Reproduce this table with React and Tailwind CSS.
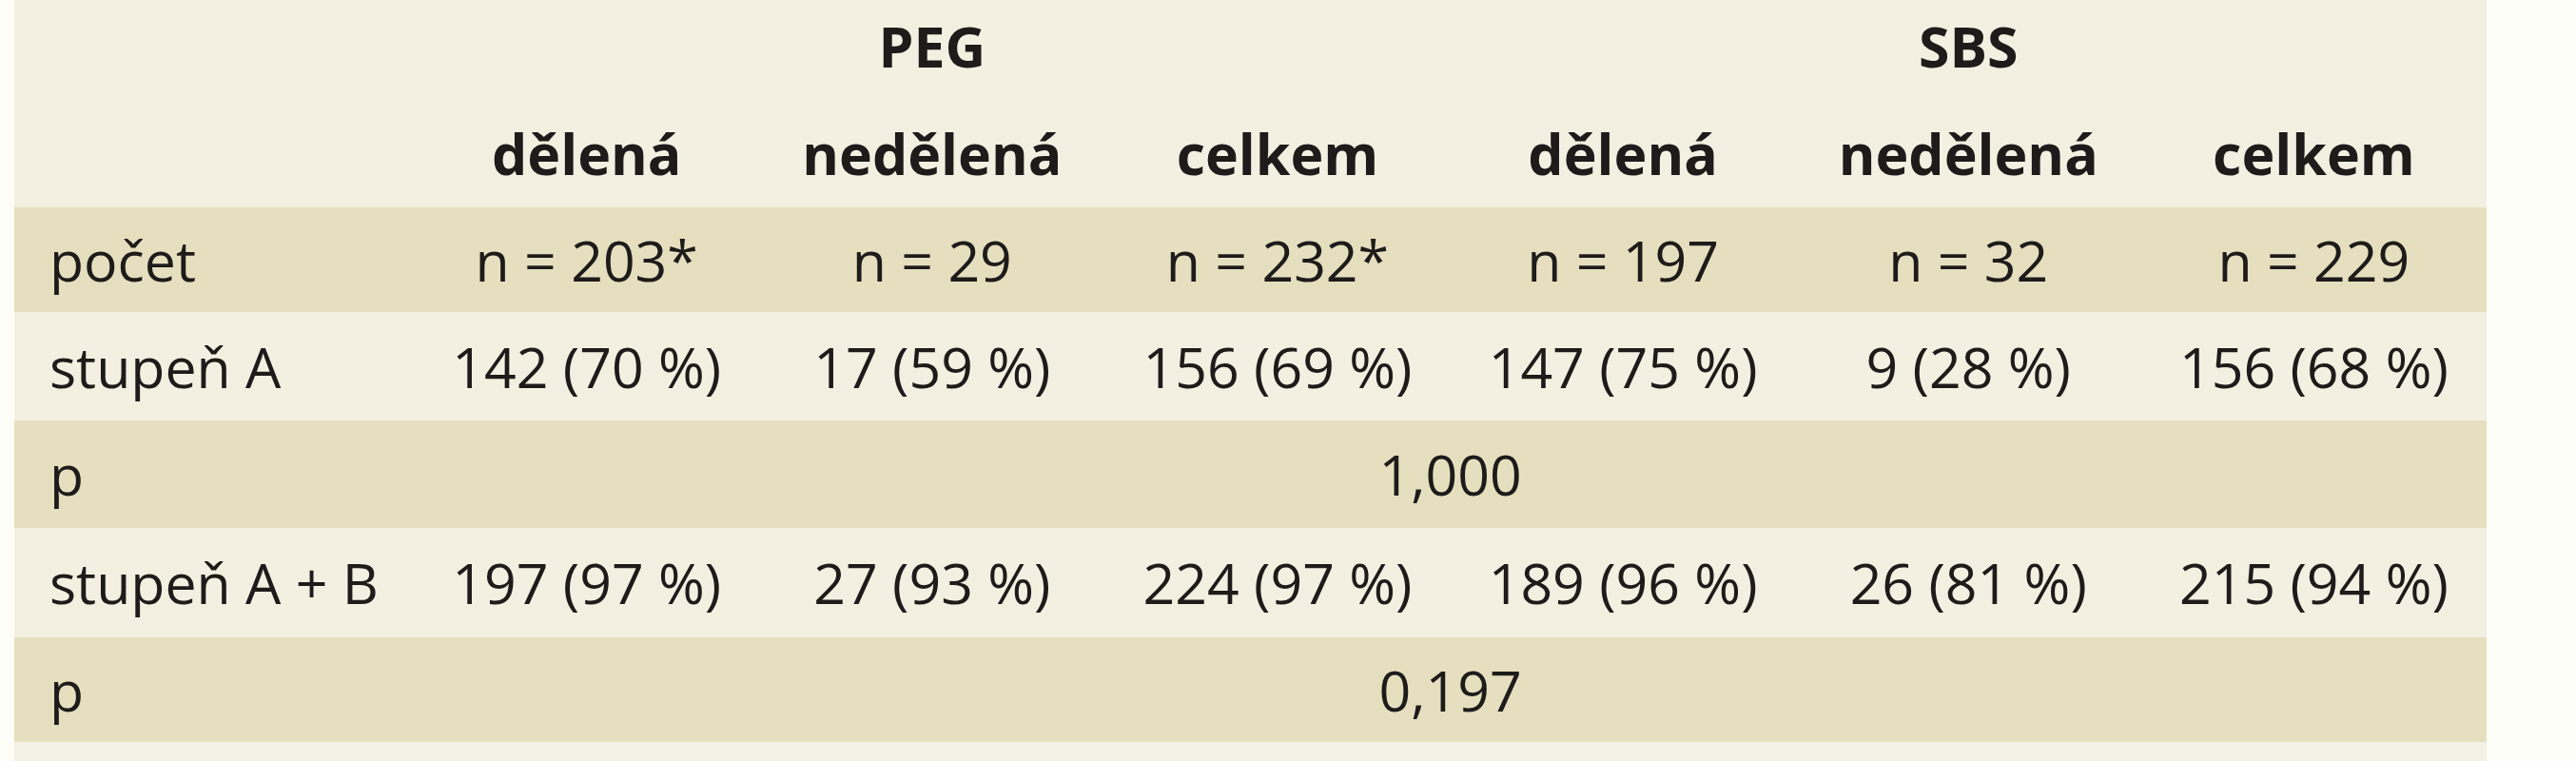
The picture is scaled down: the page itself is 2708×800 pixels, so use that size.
import React from 'react';

const ROWS = [
    { label: 'počet', dark: true, h: 'h-[110px]', cells: ['n = 203*', 'n = 29', 'n = 232*', 'n = 197', 'n = 32', 'n = 229'] },
    { label: 'stupeň A', dark: false, h: 'h-[114px]', cells: ['142 (70 %)', '17 (59 %)', '156 (69 %)', '147 (75 %)', '9 (28 %)', '156 (68 %)'] },
    { label: 'p', dark: true, h: 'h-[113px]', span: '1,000' },
    { label: 'stupeň A + B', dark: false, h: 'h-[115px]', cells: ['197 (97 %)', '27 (93 %)', '224 (97 %)', '189 (96 %)', '26 (81 %)', '215 (94 %)'] },
    { label: 'p', dark: true, h: 'h-[110px]', span: '0,197' },
];

const SUB = ['dělená', 'nedělená', 'celkem', 'dělená', 'nedělená', 'celkem'];

const App = () => {
    return (
        <div className="w-[2708px] h-[800px] overflow-hidden bg-[#fdfdf8] pl-[15px] text-[59px] leading-none text-[#1e1b1a]"
             style={{ fontFamily: '"Open Sans", "Noto Sans", sans-serif' }}>
            <table className="w-[2599px] border-collapse table-fixed">
                <colgroup>
                    <col className="w-[420px]" />
                    {SUB.map((_, i) => <col key={i} className="w-[363px]" />)}
                </colgroup>
                <thead className="bg-[#f3f0e2]">
                    <tr className="h-[100px]">
                        <th></th>
                        <th colSpan={3} className="text-center align-middle font-bold pb-[4px]">PEG</th>
                        <th colSpan={3} className="text-center align-middle font-bold pb-[4px]">SBS</th>
                    </tr>
                    <tr className="h-[118px]">
                        <th></th>
                        {SUB.map((s, i) => (
                            <th key={i} className="text-center align-middle font-bold pt-[4px]">{s}</th>
                        ))}
                    </tr>
                </thead>
                <tbody>
                    {ROWS.map((row, i) => (
                        <tr key={i} className={`${row.h} ${row.dark ? 'bg-[#e6dfbf]' : 'bg-[#f3f0e1]'}`}>
                            <td className="pl-[37px] align-middle whitespace-nowrap">{row.label}</td>
                            {row.span ? (
                                <td colSpan={6} className="text-center align-middle">{row.span}</td>
                            ) : (
                                row.cells.map((c, j) => (
                                    <td key={j} className="text-center align-middle whitespace-nowrap">{c}</td>
                                ))
                            )}
                        </tr>
                    ))}
                </tbody>
            </table>
            <div className="w-[2599px] h-[22px] bg-[#f3f0e4]"></div>
        </div>
    );
};

export default App;
